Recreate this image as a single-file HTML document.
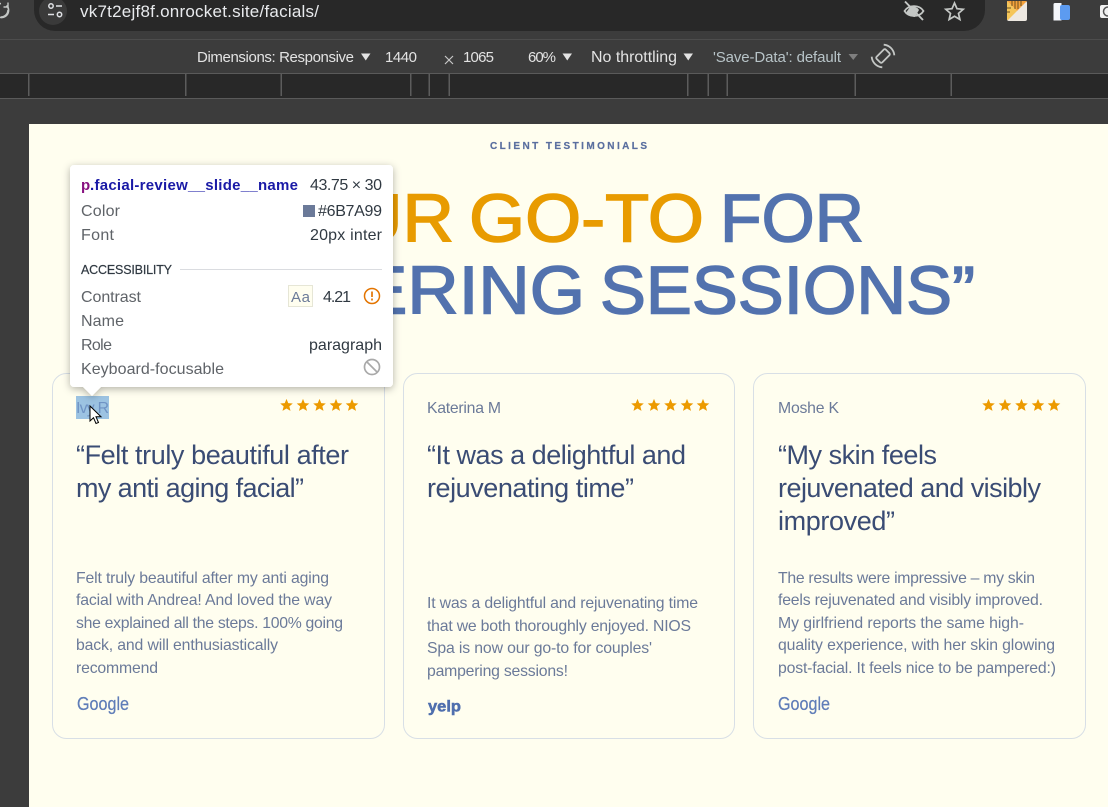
<!DOCTYPE html>
<html><head><meta charset="utf-8"><style>
html,body{margin:0;padding:0;width:1108px;height:807px;overflow:hidden;background:#3c3c3c}
svg{display:block;position:absolute;left:0;top:0}
text{font-family:"Liberation Sans",sans-serif;white-space:pre}
.tb{font-size:15px;fill:#e3e3e3}
.b{font-size:15.8px;fill:#6b7a99}
.q{font-size:27px;fill:#3a4c74}
.n{font-size:15.8px;fill:#6b7a99}
.h{font-size:67.5px;stroke-width:1.5px}
.o{fill:#e89b00;stroke:#e89b00}
.bl{fill:#5272ae;stroke:#5272ae}
.t{font-size:16px;fill:#5f6368}
.d{font-size:16px;fill:#303942}
</style></head><body>
<svg width="1108" height="807" viewBox="0 0 1108 807" xmlns="http://www.w3.org/2000/svg">
<defs>
<filter id="s" x="-10%" y="-10%" width="120%" height="125%"><feDropShadow dx="0" dy="2" stdDeviation="4" flood-color="#000" flood-opacity=".3"/></filter>
<path id="st" d="M0-6.6 1.75-2.4 6.3-2 2.85.9 4 5.4 0 3 -4 5.4 -2.85.9 -6.3-2 -1.75-2.4Z"/>
<g id="stars" fill="#ec9a00"><use href="#st" x="6.5"/><use href="#st" x="23"/><use href="#st" x="39.5"/><use href="#st" x="56"/><use href="#st" x="72"/></g>
</defs>
<rect width="1108" height="807" fill="#3c3c3c"/>
<rect x="34" y="-20" width="951" height="51" rx="21" fill="#282828"/>
<circle cx="53" cy="11" r="14" fill="#3a3a3a"/>
<path d="M6.500 5.500A7 7 0 1 1 1 3.500M1 17A7 7 0 0 0 8 10" fill="none" stroke="#c4c7c5" stroke-width="1.600"/>
<path d="M8 2.500V7H3.500" fill="none" stroke="#c4c7c5" stroke-width="1.400"/>
<g fill="none" stroke="#dfe1e5" stroke-width="1.500"><circle cx="51" cy="6" r="2.200"/><path d="M56 6h6M48 14.500h6"/><circle cx="59.500" cy="14.500" r="2.200"/></g>
<text x="80" y="17" font-size="17" fill="#e8eaed" textLength="239">vk7t2ejf8f.onrocket.site/facials/</text>
<g fill="none" stroke="#c4c7c5" stroke-width="1.700"><path d="M904.500 11c4-6.500 15-6.500 19 0-4 6.500-15 6.500-19 0Z"/><path d="M910 7c4-1.500 8 1 9 3l-4 7c-3 0-7-2-8.500-5Z" fill="#c4c7c5" stroke="none"/><path d="M905 1.500 923 20" stroke-width="1.900"/><path d="M954.500 3l2.500 5.700 6.200.6-4.700 4.100 1.400 6.100-5.400-3.200-5.400 3.200 1.400-6.100-4.700-4.100 6.200-.6Z"/></g>
<rect x="1007" y="1" width="20" height="20" rx="2" fill="#eee9e2"/>
<path d="M1007 1h20L1017 11Z" fill="#f5a23c"/><path d="M1007 1v19h1L1017 11Z" fill="#f5c65a"/>
<path d="M1012 1v5M1015 1v8M1018 1v8M1021 1v5M1007 8h4M1007 12h3" stroke="#6b5020" stroke-width="1"/>
<path d="M1055 3q-1.500 0-1.500 1.500v16h8V3Z" fill="#f4f6fa"/><rect x="1060" y="5" width="10" height="15" rx="2" fill="#5c9bf0"/>
<rect x="1100" y="5" width="12" height="13" rx="2" fill="#f2f2f2"/><circle cx="1108" cy="11.500" r="4.500" fill="none" stroke="#555" stroke-width="1.500"/>
<rect x="0" y="39" width="1108" height="1" fill="#4d4d4d"/>
<rect x="0" y="73" width="1108" height="1" fill="#5a5a5a"/>
<rect x="0" y="74" width="1108" height="24" fill="#282828"/>
<rect x="0" y="98" width="1108" height="1" fill="#5a5a5a"/>
<g fill="#5c5c5c"><rect x="28" y="74" width="1.500" height="22"/><rect x="185" y="74" width="1.500" height="22"/><rect x="280.500" y="74" width="1.500" height="22"/><rect x="410" y="74" width="1.500" height="22"/><rect x="428.500" y="74" width="1.500" height="22"/><rect x="448.500" y="74" width="1.500" height="22"/><rect x="687" y="74" width="1.500" height="22"/><rect x="707.500" y="74" width="1.500" height="22"/><rect x="726.500" y="74" width="1.500" height="22"/><rect x="854.500" y="74" width="1.500" height="22"/><rect x="950.500" y="74" width="1.500" height="22"/></g>
<text class="tb" x="197" y="62" textLength="157">Dimensions: Responsive</text>
<path d="M361 53.500h9.500l-4.750 7Z" fill="#e3e3e3"/>
<text class="tb" x="385" y="62" textLength="32">1440</text>
<path d="M445 56l8 8M453 56l-8 8" stroke="#c8c8c8" stroke-width="1.200"/>
<text class="tb" x="463" y="62" textLength="31">1065</text>
<text class="tb" x="528" y="62" textLength="28">60%</text>
<path d="M562.500 53.500h9.500l-4.750 7Z" fill="#e3e3e3"/>
<text class="tb" x="591" y="62" textLength="86" lengthAdjust="spacingAndGlyphs" style="font-size:15.8px">No throttling</text>
<path d="M683.500 53.500h9.500l-4.750 7Z" fill="#e3e3e3"/>
<text class="tb" x="713" y="62" textLength="128" style="fill:#b8c4c8">'Save-Data': default</text>
<path d="M848.500 54h9.500l-4.750 6Z" fill="#7f7f7f"/>
<g transform="rotate(45 883 56)" fill="none" stroke="#c4c7c5" stroke-width="1.800"><rect x="879" y="49.500" width="8" height="13" rx="1.500"/><path d="M875.500 47.500a11.500 11.500 0 0 1 15 0M875.500 64.500a11.500 11.500 0 0 0 15 0"/></g>
<rect x="29" y="124" width="1079" height="683" fill="#fffeef"/>
<text x="490" y="149" font-size="10" font-weight="700" fill="#5a6f9f" stroke="#5a6f9f" stroke-width=".2" textLength="157">CLIENT TESTIMONIALS</text>
<text class="h o" x="351" y="241.500" textLength="103" lengthAdjust="spacingAndGlyphs">UR</text>
<text class="h o" x="469" y="241.500" textLength="235" lengthAdjust="spacingAndGlyphs">GO-TO</text>
<text class="h bl" x="720" y="241.500" textLength="144" lengthAdjust="spacingAndGlyphs">FOR</text>
<text class="h bl" x="360" y="313.500" textLength="225" lengthAdjust="spacingAndGlyphs">ERING</text>
<text class="h bl" x="600" y="313.500" textLength="375" lengthAdjust="spacingAndGlyphs">SESSIONS”</text>
<g fill="#fffeef" stroke="#d8dfe6"><rect x="52.500" y="373.500" width="332" height="365" rx="14"/><rect x="403.500" y="373.500" width="331" height="365" rx="14"/><rect x="753.500" y="373.500" width="332" height="365" rx="14"/></g>
<rect x="76" y="396" width="33" height="23" fill="#9cc3e2"/>
<text class="n" x="76" y="413" textLength="33" style="fill:#6f93c4">Ivy R</text>
<text class="n" x="427" y="413" textLength="74">Katerina M</text>
<text class="n" x="778" y="413" textLength="61">Moshe K</text>
<use href="#stars" x="280" y="405.500"/><use href="#stars" x="631" y="405.500"/><use href="#stars" x="982" y="405.500"/>
<text class="q" x="76" y="464" textLength="273">“Felt truly beautiful after</text>
<text class="q" x="76" y="497" textLength="228">my anti aging facial”</text>
<text class="q" x="427" y="464" textLength="259">“It was a delightful and</text>
<text class="q" x="427" y="497" textLength="207">rejuvenating time”</text>
<text class="q" x="778" y="464" textLength="159">“My skin feels</text>
<text class="q" x="778" y="497" textLength="263">rejuvenated and visibly</text>
<text class="q" x="778" y="530" textLength="117">improved”</text>
<text class="b" x="76" y="583" textLength="253">Felt truly beautiful after my anti aging</text>
<text class="b" x="76" y="605" textLength="256">facial with Andrea! And loved the way</text>
<text class="b" x="76" y="628" textLength="267">she explained all the steps. 100% going</text>
<text class="b" x="76" y="650" textLength="202">back, and will enthusiastically</text>
<text class="b" x="76" y="673" textLength="82">recommend</text>
<text class="b" x="427" y="608" textLength="271">It was a delightful and rejuvenating time</text>
<text class="b" x="427" y="631" textLength="264">that we both thoroughly enjoyed. NIOS</text>
<text class="b" x="427" y="653" textLength="225">Spa is now our go-to for couples'</text>
<text class="b" x="427" y="676" textLength="141">pampering sessions!</text>
<text class="b" x="778" y="583" textLength="257">The results were impressive – my skin</text>
<text class="b" x="778" y="605" textLength="265">feels rejuvenated and visibly improved.</text>
<text class="b" x="778" y="628" textLength="246">My girlfriend reports the same high-</text>
<text class="b" x="778" y="650" textLength="277">quality experience, with her skin glowing</text>
<text class="b" x="778" y="673" textLength="278">post-facial. It feels nice to be pampered:)</text>
<text x="77" y="710" font-size="18.500" fill="#5f7db8" stroke="#5f7db8" stroke-width=".25" textLength="52" lengthAdjust="spacingAndGlyphs">Google</text>
<text x="778" y="710" font-size="18.500" fill="#5f7db8" stroke="#5f7db8" stroke-width=".25" textLength="52" lengthAdjust="spacingAndGlyphs">Google</text>
<text x="428" y="711.500" font-size="15.500" font-weight="700" fill="#4f6fae" stroke="#4f6fae" stroke-width=".5" textLength="33" lengthAdjust="spacingAndGlyphs">yelp</text>
<g filter="url(#s)"><path d="M74 165h315a4 4 0 0 1 4 4v214a4 4 0 0 1-4 4H101l-9 9-9-9H74a4 4 0 0 1-4-4V169a4 4 0 0 1 4-4Z" fill="#fff"/></g>
<text x="81" y="190" font-size="15" font-weight="700" fill="#881280">p</text>
<text x="90" y="190" font-size="15" font-weight="700" fill="#1a1aa6" textLength="208">.facial-review__slide__name</text>
<text class="d" x="310" y="190" textLength="72">43.75 × 30</text>
<text class="t" x="81" y="216" textLength="39">Color</text>
<rect x="303" y="205" width="12" height="12" fill="#6b7a99"/>
<text class="d" x="318" y="216" textLength="64">#6B7A99</text>
<text class="t" x="81" y="240" textLength="33">Font</text>
<text class="d" x="310" y="240" textLength="72">20px inter</text>
<text x="81" y="274" font-size="12.500" fill="#303942" stroke="#303942" stroke-width=".2" textLength="91">ACCESSIBILITY</text>
<rect x="180" y="269" width="202" height="1" fill="#dadce0"/>
<text class="t" x="81" y="302" textLength="60">Contrast</text>
<rect x="288.500" y="285.500" width="24" height="21" fill="#fffeef" stroke="#e6e6d6"/>
<text x="291" y="302" font-size="15" fill="#6b7a99" textLength="19">Aa</text>
<text class="d" x="323" y="302" textLength="28">4.21</text>
<circle cx="372" cy="296" r="7.500" fill="none" stroke="#e37400" stroke-width="1.500"/>
<path d="M372 291.500v5.500M372 298.500v2" stroke="#e37400" stroke-width="1.700"/>
<text class="t" x="81" y="326" textLength="43">Name</text>
<text class="t" x="81" y="350" textLength="31">Role</text>
<text class="d" x="309" y="350" textLength="73">paragraph</text>
<text class="t" x="81" y="374" textLength="143">Keyboard-focusable</text>
<circle cx="372" cy="367" r="7.500" fill="none" stroke="#a9a9a9" stroke-width="1.700"/>
<path d="M366.500 361.500l11 11" stroke="#a9a9a9" stroke-width="1.700"/>
<path d="M90 406v15l3.500-3.300 2.500 5.800 2.500-1-2.500-5.700h5Z" fill="#fff" stroke="#000" stroke-width="1"/>
</svg>
</body></html>
